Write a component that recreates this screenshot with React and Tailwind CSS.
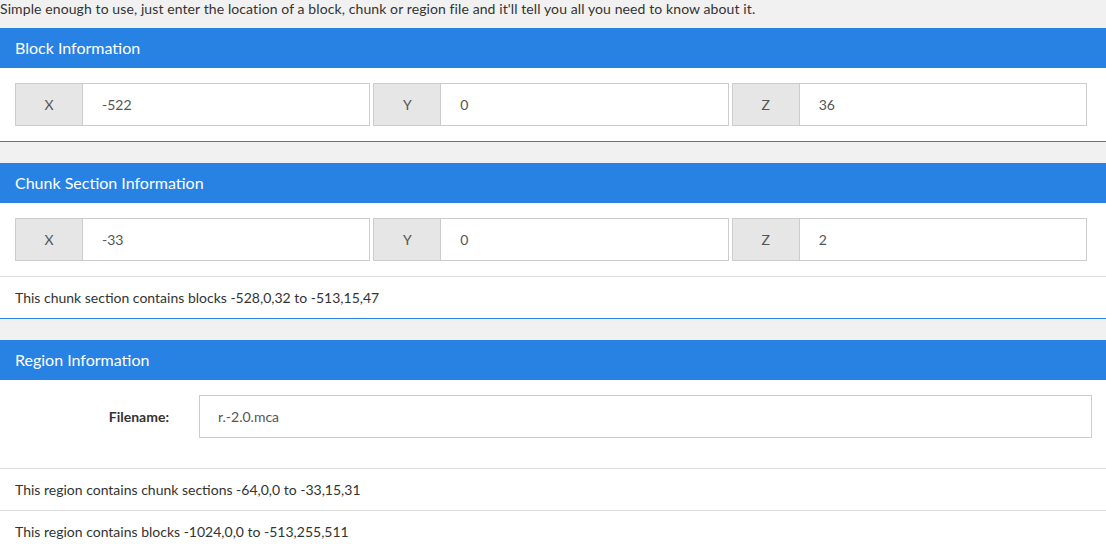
import React from "react";

const FONT = { fontFamily: "Lato, 'Noto Sans', sans-serif" };

const Panel = ({ title, children }) => (
  <div className="bg-white border-b border-[#2a7fe0]">
    <div className="h-10 bg-[#2882e3] text-white text-[16px] flex items-center px-[15px]">
      {title}
    </div>
    {children}
  </div>
);

const CoordGroup = ({ label, value }) => (
  <div className="flex h-[43px] border border-[#cccccc]">
    <div className="w-[67px] shrink-0 bg-[#e6e6e6] border-r border-[#cccccc] flex items-center justify-center text-[14px] text-[#555]">
      {label}
    </div>
    <div className="flex-1 flex items-center pl-[19px] text-[14px] text-[#555] bg-white">
      {value}
    </div>
  </div>
);

const CoordRow = ({ x, y, z }) => (
  <div className="pl-[15px] pr-[19px] py-[15px] grid grid-cols-3 gap-[3px]">
    <CoordGroup label="X" value={x} />
    <CoordGroup label="Y" value={y} />
    <CoordGroup label="Z" value={z} />
  </div>
);

const InfoRow = ({ children }) => (
  <div className="h-[42px] border-t border-[#dddddd] flex items-center px-[15px] text-[14px] text-[#333]">
    {children}
  </div>
);

export default function App() {
  return (
    <div className="w-[1106px] h-[548px] overflow-hidden bg-[#f1f1f1]" style={FONT}>
      <p className="h-7 text-[14px] text-[#333] leading-[18px] tracking-[0.1px]">
        Simple enough to use, just enter the location of a block, chunk or region file and it'll tell you all you need to know about it.
      </p>

      <Panel title="Block Information">
        <CoordRow x="-522" y="0" z="36" />
      </Panel>

      <div className="h-[21px]" />

      <Panel title="Chunk Section Information">
        <CoordRow x="-33" y="0" z="2" />
        <InfoRow>This chunk section contains blocks -528,0,32 to -513,15,47</InfoRow>
      </Panel>

      <div className="h-[21px]" />

      <div className="bg-white">
        <div className="h-10 bg-[#2882e3] text-white text-[16px] flex items-center px-[15px]">
          Region Information
        </div>
        <div className="pt-[15px] pb-[30px] flex items-center">
          <label className="w-[184px] pr-[15px] text-right text-[14px] font-bold text-[#333]">
            Filename:
          </label>
          <div className="ml-[15px] w-[893px] h-[43px] border border-[#cccccc] flex items-center pl-[18px] text-[14px] text-[#555]">
            r.-2.0.mca
          </div>
        </div>
        <InfoRow>This region contains chunk sections -64,0,0 to -33,15,31</InfoRow>
        <InfoRow>This region contains blocks -1024,0,0 to -513,255,511</InfoRow>
      </div>
    </div>
  );
}
